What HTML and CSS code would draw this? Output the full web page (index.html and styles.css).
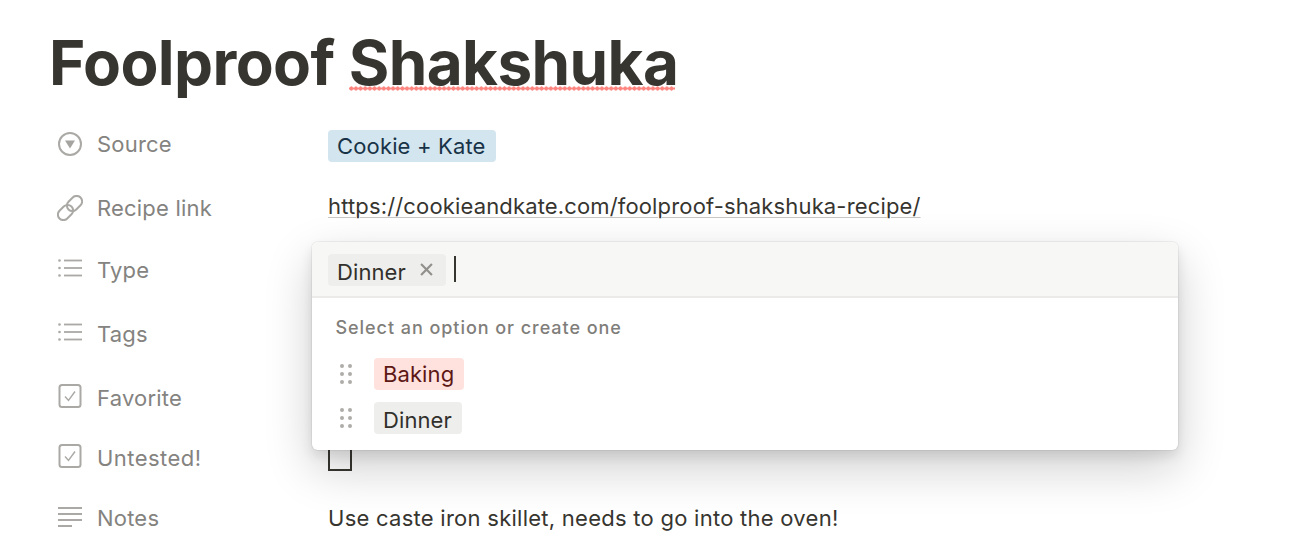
FILE: index.html
```html
<!DOCTYPE html>
<html lang="en">
<head>
<meta charset="utf-8">
<title>Foolproof Shakshuka</title>
<link rel="stylesheet" href="styles.css">
</head>
<body>
<main class="page">
  <h1 class="title">Foolproof <span class="misspelled">Shakshuka</span></h1>
  <div class="props">
    <div class="row row-source">
      <div class="label">
        <svg class="icon" viewBox="0 0 24 24"><circle cx="12" cy="12" r="11" fill="none" stroke="#aaa9a5" stroke-width="2"/><path d="M7 8.5h10L12 16.5z" fill="#a5a4a0"/></svg>
        <span>Source</span>
      </div>
      <div class="value"><span class="tag tag-blue">Cookie + Kate</span></div>
    </div>
    <div class="row row-link">
      <div class="label">
        <svg class="icon" viewBox="0 0 26 26"><g fill="none" stroke="#aaa9a5" stroke-width="2"><rect x="9" y="3" width="17" height="11" rx="5.5" transform="rotate(-45 17.5 8.5)"/><rect x="0" y="12" width="17" height="11" rx="5.5" transform="rotate(-45 8.5 17.5)"/></g></svg>
        <span>Recipe link</span>
      </div>
      <div class="value"><a class="link" href="#">https://cookieandkate.com/foolproof-shakshuka-recipe/</a></div>
    </div>
    <div class="row row-type">
      <div class="label">
        <svg class="icon icon-list" viewBox="0 0 24 24"><g fill="#aaa9a5"><circle cx="1.5" cy="4.5" r="1.3"/><circle cx="1.5" cy="12" r="1.3"/><circle cx="1.5" cy="19.5" r="1.3"/><rect x="6" y="3.6" width="18" height="1.8"/><rect x="6" y="11.1" width="18" height="1.8"/><rect x="6" y="18.6" width="18" height="1.8"/></g></svg>
        <span>Type</span>
      </div>
      <div class="value"></div>
    </div>
    <div class="row row-tags">
      <div class="label">
        <svg class="icon icon-list" viewBox="0 0 24 24"><g fill="#aaa9a5"><circle cx="1.5" cy="4.5" r="1.3"/><circle cx="1.5" cy="12" r="1.3"/><circle cx="1.5" cy="19.5" r="1.3"/><rect x="6" y="3.6" width="18" height="1.8"/><rect x="6" y="11.1" width="18" height="1.8"/><rect x="6" y="18.6" width="18" height="1.8"/></g></svg>
        <span>Tags</span>
      </div>
      <div class="value"></div>
    </div>
    <div class="row row-fav">
      <div class="label">
        <svg class="icon icon-check" viewBox="0 0 24 24"><rect x="1.5" y="1" width="21" height="22" rx="2.5" fill="none" stroke="#aaa9a5" stroke-width="2"/><path d="M7 12.5l3.5 4L17 7.5" fill="none" stroke="#aaa9a5" stroke-width="1.4"/></svg>
        <span>Favorite</span>
      </div>
      <div class="value"></div>
    </div>
    <div class="row row-untested">
      <div class="label">
        <svg class="icon icon-check" viewBox="0 0 24 24"><rect x="1.5" y="1" width="21" height="22" rx="2.5" fill="none" stroke="#aaa9a5" stroke-width="2"/><path d="M7 12.5l3.5 4L17 7.5" fill="none" stroke="#aaa9a5" stroke-width="1.4"/></svg>
        <span>Untested!</span>
      </div>
      <div class="value"><span class="checkbox"></span></div>
    </div>
    <div class="row row-notes">
      <div class="label">
        <svg class="icon icon-notes" viewBox="0 0 24 24"><g fill="#aaa9a5"><rect x="0" y="2" width="24" height="2"/><rect x="0" y="8" width="24" height="2"/><rect x="0" y="14" width="24" height="2"/><rect x="0" y="20" width="14" height="2"/></g></svg>
        <span>Notes</span>
      </div>
      <div class="value notes">Use caste iron skillet, needs to go into the oven!</div>
    </div>
  </div>

  <section class="popup">
    <div class="popup-head">
      <span class="tag tag-gray chip">Dinner <svg class="chip-x" viewBox="0 0 12 12"><path d="M1 1l10 10M11 1L1 11" stroke="#91908c" stroke-width="2" fill="none"/></svg></span>
      <span class="caret"></span>
    </div>
    <div class="popup-body">
      <div class="hint">Select an option or create one</div>
      <div class="option">
        <svg class="grip" viewBox="0 0 14 22"><g fill="#aeada9"><circle cx="3" cy="3" r="2"/><circle cx="11" cy="3" r="2"/><circle cx="3" cy="11" r="2"/><circle cx="11" cy="11" r="2"/><circle cx="3" cy="19" r="2"/><circle cx="11" cy="19" r="2"/></g></svg>
        <span class="tag tag-red">Baking</span>
      </div>
      <div class="option">
        <svg class="grip" viewBox="0 0 14 22"><g fill="#aeada9"><circle cx="3" cy="3" r="2"/><circle cx="11" cy="3" r="2"/><circle cx="3" cy="11" r="2"/><circle cx="11" cy="11" r="2"/><circle cx="3" cy="19" r="2"/><circle cx="11" cy="19" r="2"/></g></svg>
        <span class="tag tag-light">Dinner</span>
      </div>
    </div>
  </section>
</main>
</body>
</html>
```
FILE: styles.css
```css
* { box-sizing: border-box; }
html, body { margin: 0; height: 100%; background: #fff; overflow: hidden; }
body { font-family: Inter, "Liberation Sans", sans-serif; color: #37352f; }
.page { position: relative; width: 1296px; height: 560px; padding: 27px 0 0 49px; }
.title { margin: 0; font-size: 62px; line-height: 72px; font-weight: 700; color: #37352f; letter-spacing: -0.6px; }
.misspelled { position: relative; }
.misspelled::after {
  content: "";
  position: absolute; left: 0; top: 61px; width: 326px; height: 5px;
  background-image: radial-gradient(circle, #ff8580 1.9px, transparent 2.3px);
  background-size: 4.65px 5px;
  background-repeat: repeat-x;
}
.props { margin-top: 13px; margin-left: 1px; display: flex; flex-direction: column; }
.row { display: flex; align-items: center; }
.row-source { height: 64px; }
.row-link { height: 64px; }
.row-type { height: 60px; }
.row-tags { height: 68px; }
.row-fav { height: 60px; }
.row-untested { height: 60px; }
.row-notes { height: 60px; }
.label { width: 278px; display: flex; align-items: center; gap: 15px; padding-left: 8px; font-size: 22px; letter-spacing: .2px; color: #84837f; }
.row-untested .label { letter-spacing: .45px; }
.icon { width: 24px; height: 24px; flex: none; }
.row-link .icon { width: 26px; height: 26px; margin-right: -2px; margin-left: -1px; }
.row-link .label span { margin-left: 1px; }
.icon-list { margin-top: -5px; }
.icon-check { margin-top: -4px; }
.icon-notes { margin-top: -2px; }
.value { font-size: 22px; letter-spacing: .15px; color: #37352f; }
.notes { letter-spacing: .26px; }
.row-link .value { margin-top: -4px; }
.row-source .value { margin-top: 4px; }
.row-untested .value { margin-top: 2px; }
.tag { display: inline-flex; align-items: center; height: 32px; padding: 0 9px; border-radius: 4px; font-size: 22px; }
.tag-blue { background: #d3e5ef; color: #183347; letter-spacing: .15px; padding-right: 10px; }
.tag-gray { background: #eeeeec; color: #32302c; padding-top: 4px; }
.tag-red { background: #ffe2dd; color: #5d1715; padding-right: 10px; }
.tag-light { background: #eeeeed; color: #32302c; padding-top: 4px; padding-right: 10px; }
.link { color: #37352f; text-decoration: underline 1px #c9c8c5; text-underline-offset: 3px; }
.checkbox { display: block; width: 24px; height: 24px; border: 2px solid #37352f; }
.popup {
  position: absolute; left: 312px; top: 242px; width: 866px; height: 208px;
  background: #fff; border-radius: 6px; overflow: hidden;
  box-shadow: 0 0 0 1px rgba(15,15,15,.05), 0 6px 12px rgba(15,15,15,.1), 0 18px 48px rgba(15,15,15,.2);
}
.popup-head { height: 56px; background: #f7f7f5; border-bottom: 2px solid #ebeae8; padding: 12px 16px; display: flex; align-items: flex-start; gap: 8px; }
.chip { gap: 14px; padding-right: 13px; letter-spacing: .1px; }
.chip-x { width: 13px; height: 13px; margin-top: -6px; }
.caret { width: 2px; height: 26px; background: #37352f; margin-top: 2px; }
.popup-body { padding: 16px 0 0 0; }
.hint { margin-bottom: 10px; padding-left: 23.5px; font-size: 18px; line-height: 28px; font-weight: 500; color: #7f7e7a; letter-spacing: .95px; }
.option { height: 44px; display: flex; align-items: center; gap: 21px; padding-left: 27px; }
.option .tag { letter-spacing: .1px; }
.grip { width: 14px; height: 22px; flex: none; }
```
